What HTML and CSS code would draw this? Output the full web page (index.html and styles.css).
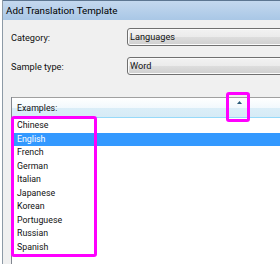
FILE: index.html
```html
<!DOCTYPE html>
<html>
<head>
    <title>Add Translation Template</title>
    <link rel="stylesheet" href="styles.css">
</head>
<body>
    <div class="window">
        <div class="titlebar">Add Translation Template</div>

        <div class="content">
            <div class="field">
                <span class="label">Category:</span>
                <div class="combo">Languages</div>
            </div>
            <div class="field">
                <span class="label">Sample type:</span>
                <div class="combo">Word</div>
            </div>

            <div class="list">
                <div class="list-head">
                    <span>Examples:</span>
                    <svg class="sort" width="5" height="3" viewBox="0 0 5 3">
                        <polygon points="0,3 2.5,0 5,3" fill="#2a5a78"/>
                    </svg>
                </div>
                <ul class="items">
                    <li>Chinese</li>
                    <li class="selected">English</li>
                    <li>French</li>
                    <li>German</li>
                    <li>Italian</li>
                    <li>Japanese</li>
                    <li>Korean</li>
                    <li>Portuguese</li>
                    <li>Russian</li>
                    <li>Spanish</li>
                </ul>
            </div>
        </div>
    </div>

    <!-- highlight marks drawn over the screenshot -->
    <div class="mark mark-list"></div>
    <div class="mark mark-sort"></div>
</body>
</html>
```

FILE: styles.css
```css
body {
    margin: 0;
    width: 280px;
    height: 264px;
    overflow: hidden;
    background: #ffffff;
    font-family: Roboto, "Open Sans", sans-serif;
    font-size: 9.2px;
    color: #111;
    position: relative;
}

.window {
    margin-left: 2px;
    height: 264px;
    border-left: 1px solid #8d9aa6;
    background: #f0f0f0;
}

.titlebar {
    height: 19px;
    border-top: 1px solid #5d7691;
    background: linear-gradient(#c4d8ee, #a9c7e6);
    padding-left: 3px;
    font-size: 9.8px;
    line-height: 20px;
    color: #000;
}

.content {
    padding: 8px 0 0 8px;
}

.field {
    display: flex;
    align-items: center;
    height: 18px;
    margin-bottom: 11px;
}

.label {
    width: 116px;
}

.combo {
    flex: 1;
    height: 16px;
    line-height: 16px;
    padding-left: 2px;
    margin-right: -6px;
    border: 1px solid #707070;
    border-radius: 3px;
    box-shadow: inset 0 0 0 1px #fbfbfb;
    background: linear-gradient(#f2f2f2 0%, #ebebeb 50%, #dddddd 51%, #cfcfcf 100%);
}

.list {
    margin-top: 22px;
    background: #ffffff;
    border-left: 1px solid #828790;
    height: 170px;
    font-size: 8.8px;
}

.list-head {
    display: flex;
    align-items: center;
    position: relative;
    height: 19px;
    padding-left: 5px;
    border-top: 1px solid #a0a0a0;
    border-bottom: 1px solid #96d9f9;
    background: linear-gradient(#ffffff 0%, #f2f9fd 50%, #dbeef8 51%, #d6ebf6 100%);
}

.sort {
    position: absolute;
    left: 225px;
    top: 3px;
}

.items {
    list-style: none;
    margin: 0;
    padding: 1px 0 0;
}

.items li {
    height: 13.5px;
    line-height: 13.5px;
    padding-left: 5px;
}

.items li.selected {
    background: #3399ff;
    color: #ffffff;
}

.mark {
    position: absolute;
    box-sizing: border-box;
    border: 3px solid #ff00ff;
    border-radius: 3px;
}

.mark-list {
    left: 11px;
    top: 116px;
    width: 86px;
    height: 141px;
}

.mark-sort {
    left: 226px;
    top: 92px;
    width: 24px;
    height: 30px;
}
```
